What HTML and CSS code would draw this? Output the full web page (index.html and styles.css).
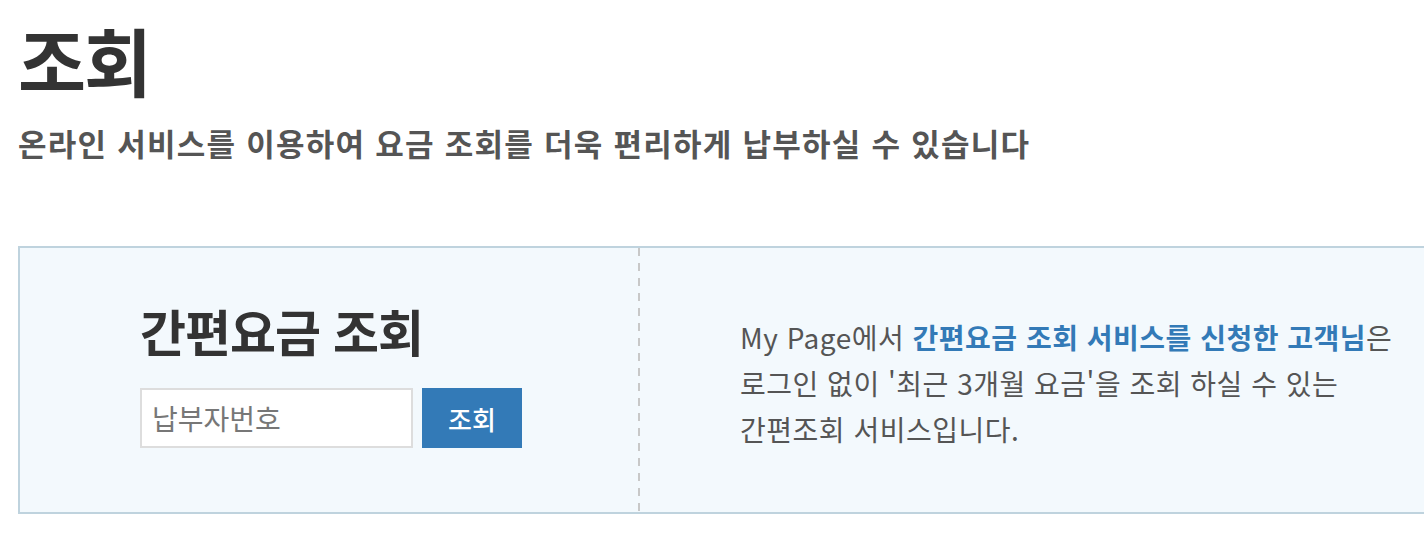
FILE: index.html
```html
<!DOCTYPE html>
<html lang="ko">
<head>
<meta charset="utf-8">
<title>조회</title>
<link rel="stylesheet" href="styles.css">
</head>
<body>
<div class="page">
  <h1 class="title">조회</h1>
  <p class="subtitle">온라인 서비스를 이용하여 요금 조회를 더욱 편리하게 납부하실 수 있습니다</p>
  <div class="box">
    <div class="left">
      <h2 class="box-title">간편요금 조회</h2>
      <form class="search">
        <input class="search-input" type="text" placeholder="납부자번호">
        <button class="search-btn" type="button">조회</button>
      </form>
    </div>
    <div class="divider"></div>
    <div class="right">
      <p class="desc">My Page에서 <strong class="hl">간편요금 조회 서비스를 신청한 고객님</strong>은<br>로그인 없이 '최근 3개월 요금'을 조회 하실 수 있는<br>간편조회 서비스입니다.</p>
    </div>
  </div>
</div>
</body>
</html>
```

FILE: styles.css
```css
* { box-sizing: border-box; }
html, body { margin: 0; padding: 0; background: #fff; }
body {
  font-family: "Noto Sans CJK KR", "Noto Sans", sans-serif;
  color: #333;
  overflow: hidden;
}
.page {
  padding: 0 0 0 18px;
  width: 1460px;
}
.title {
  margin: 0;
  padding-top: 14px;
  font-size: 74px;
  line-height: 90px;
  font-weight: 700;
  color: #333;
  letter-spacing: -2px;
}
.subtitle {
  margin: 19px 0 0;
  font-size: 31px;
  line-height: 40px;
  font-weight: 700;
  color: #555;
  letter-spacing: 1.25px;
}
.box {
  margin-top: 83px;
  display: flex;
  height: 268px;
  border: 2px solid #bfd3de;
  background: #f3f9fd;
}
.left {
  width: 618px;
  padding: 52px 0 0 120px;
}
.box-title {
  margin: 0;
  font-size: 50px;
  line-height: 60px;
  font-weight: 700;
  color: #333;
  letter-spacing: -1px;
}
.search {
  display: flex;
  gap: 9px;
  margin-top: 28px;
}
.search-input {
  width: 273px;
  height: 60px;
  border: 2px solid #ddd;
  background: #fff;
  padding: 0 10px;
  font-family: inherit;
  font-size: 28px;
  color: #333;
  outline: none;
}
.search-input::placeholder { color: #777; }
.search-btn {
  width: 100px;
  height: 60px;
  border: 0;
  background: #337ab7;
  color: #fff;
  font-family: inherit;
  font-size: 26px;
  font-weight: 500;
  padding: 0;
}
.divider {
  width: 2px;
  background: repeating-linear-gradient(to bottom, #c8c8c8 0 8px, transparent 8px 15px);
}
.right {
  flex: 1;
  display: flex;
  align-items: center;
  padding: 6px 0 0 100px;
}
.desc {
  margin: 0;
  font-size: 28px;
  line-height: 46px;
  color: #555;
  letter-spacing: 0.5px;
}
.hl {
  color: #337ab7;
  font-weight: 700;
}
```
